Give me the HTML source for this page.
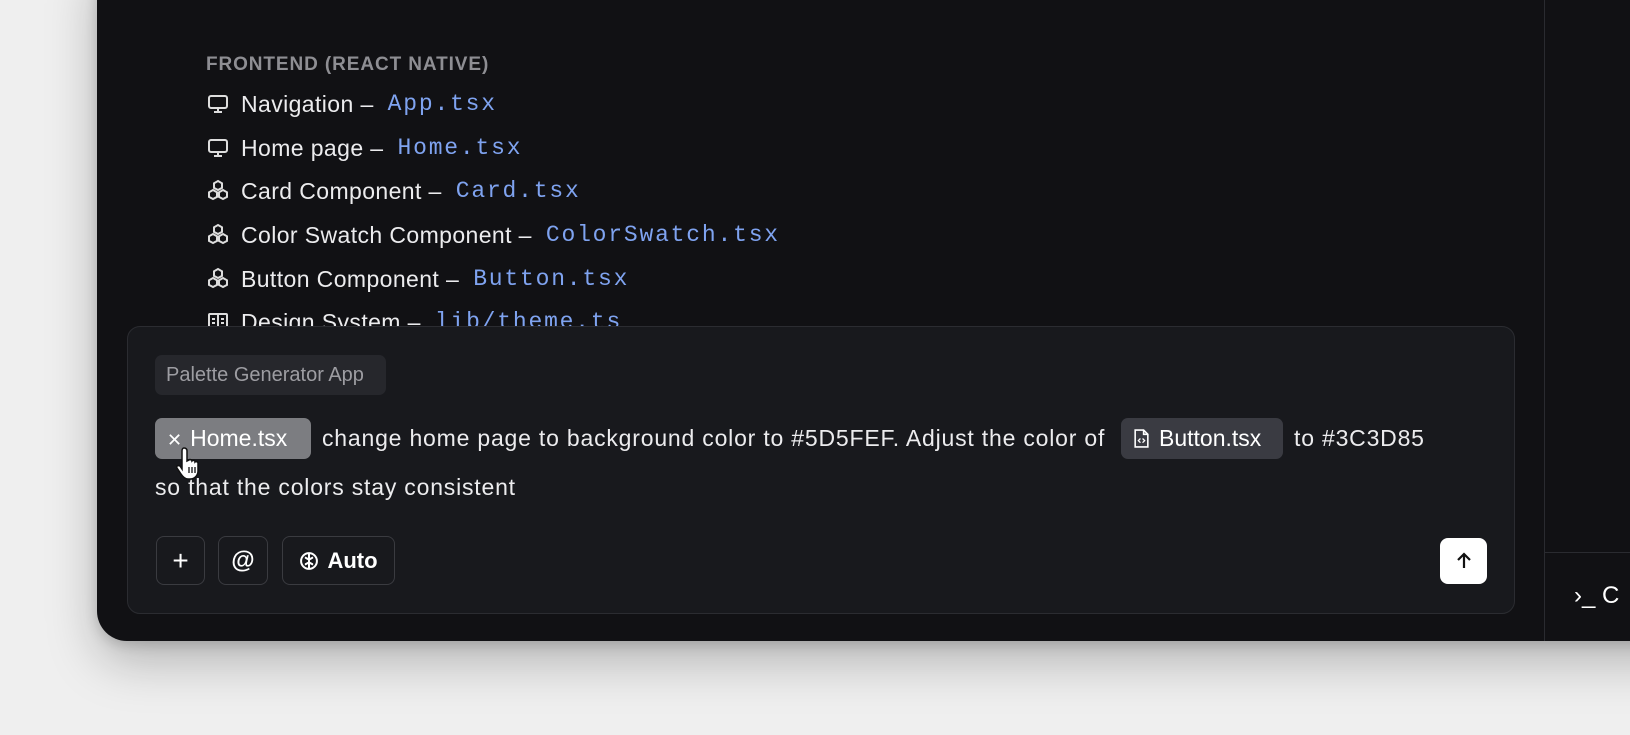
<!DOCTYPE html>
<html><head><meta charset="utf-8"><style>
*{margin:0;padding:0;box-sizing:border-box}
body{width:1630px;height:735px;background:#efefef;position:relative;overflow:hidden;font-family:"Liberation Sans",sans-serif}
.panel{position:absolute;left:97px;top:-40px;width:1600px;height:681px;background:#111114;border-radius:0 0 0 30px;box-shadow:0 20px 50px rgba(0,0,0,.25),0 4px 12px rgba(0,0,0,.15);overflow:hidden}
.a{position:absolute;white-space:nowrap}
.h{left:206px;top:54px;font-size:19px;font-weight:bold;color:#8e8e93;letter-spacing:0.9px}
.row{left:206px;font-size:23px;letter-spacing:0.4px;color:#ececee;height:30px;line-height:30px;display:flex;align-items:center}
.row svg{margin-right:11px;flex:none}
.m{font-family:"Liberation Mono",monospace;color:#7fa3f0;letter-spacing:1.8px;margin-left:14px}
.box{position:absolute;left:127px;top:326px;width:1388px;height:288px;background:#18191d;border:1px solid #2b2c31;border-radius:13px}
.chip{position:absolute;border-radius:7px}
.btn{position:absolute;border:1.5px solid #3a3b40;border-radius:8px;color:#fff;display:flex;align-items:center;justify-content:center}
.t{font-size:23px;letter-spacing:0.8px;color:#ececee}
</style></head><body>
<div class="panel"></div>
<div style="position:absolute;left:1544px;top:0;width:1px;height:641px;background:#2a2b30"></div>
<div style="position:absolute;left:1544px;top:552px;width:90px;height:1px;background:#2a2b30"></div>
<div class="a" style="left:1574px;top:582px;font-size:24px;color:#fff">›_ C</div>

<div class="a h">FRONTEND (REACT NATIVE)</div>
<div class="a row" style="top:89px"><svg width="24" height="24" viewBox="0 0 24 24" fill="none" stroke="#ddd" stroke-width="2"><rect x="3" y="4" width="18" height="12" rx="2"/><path d="M12 16v4M8 20h8"/></svg>Navigation –<span class="m">App.tsx</span></div>
<div class="a row" style="top:133px"><svg width="24" height="24" viewBox="0 0 24 24" fill="none" stroke="#ddd" stroke-width="2"><rect x="3" y="4" width="18" height="12" rx="2"/><path d="M12 16v4M8 20h8"/></svg>Home page –<span class="m">Home.tsx</span></div>
<div class="a row" style="top:176px"><svg width="24" height="24" viewBox="0 0 24 24" fill="none" stroke="#ddd" stroke-width="2"><path d="M12 2l4 2.3v4.6L12 11 8 8.9V4.3zM7 11l4 2.3v4.6L7 20 3 17.9v-4.6zM17 11l4 2.3v4.6L17 20l-4-2.1v-4.6z"/></svg>Card Component –<span class="m">Card.tsx</span></div>
<div class="a row" style="top:220px"><svg width="24" height="24" viewBox="0 0 24 24" fill="none" stroke="#ddd" stroke-width="2"><path d="M12 2l4 2.3v4.6L12 11 8 8.9V4.3zM7 11l4 2.3v4.6L7 20 3 17.9v-4.6zM17 11l4 2.3v4.6L17 20l-4-2.1v-4.6z"/></svg>Color Swatch Component –<span class="m">ColorSwatch.tsx</span></div>
<div class="a row" style="top:264px"><svg width="24" height="24" viewBox="0 0 24 24" fill="none" stroke="#ddd" stroke-width="2"><path d="M12 2l4 2.3v4.6L12 11 8 8.9V4.3zM7 11l4 2.3v4.6L7 20 3 17.9v-4.6zM17 11l4 2.3v4.6L17 20l-4-2.1v-4.6z"/></svg>Button Component –<span class="m">Button.tsx</span></div>
<div class="a row" style="top:307px"><svg width="24" height="24" viewBox="0 0 24 24" fill="none" stroke="#ddd" stroke-width="2"><rect x="3" y="4" width="18" height="16" rx="1"/><path d="M12 4v16M6 9h3M6 13h3M15 9h3M15 13h3"/></svg>Design System –<span class="m">lib/theme.ts</span></div>

<div class="box"></div>
<div class="chip a" style="left:155px;top:355px;width:231px;height:40px;background:#26272c;color:#9d9da2;font-size:20px;line-height:40px;padding-left:11px">Palette Generator App</div>
<div class="chip a" style="left:155px;top:418px;width:156px;height:41px;background:#7c7d81;color:#fff;font-size:23px;line-height:41px;padding-left:12px"><span style="font-size:18px;margin-right:8px">✕</span>Home.tsx</div>
<div class="a t" style="left:322px;top:425px">change home page to background color to #5D5FEF. Adjust the color of</div>
<div class="chip a" style="left:1121px;top:418px;width:162px;height:41px;background:#3a3b42;color:#fff;font-size:23px;line-height:41px;padding-left:12px;display:flex;align-items:center"><svg width="17" height="19" viewBox="0 0 16 18" fill="none" stroke="#fff" stroke-width="1.5" style="margin-right:9px"><path d="M2 1h8l4 4v12H2z M10 1v4h4"/><path d="M7 9l-2 2 2 2M9 9l2 2-2 2" stroke-width="1.2"/></svg>Button.tsx</div>
<div class="a t" style="left:1294px;top:425px">to #3C3D85</div>
<div class="a t" style="left:155px;top:474px">so that the colors stay consistent</div>
<svg class="a" style="left:176px;top:446px" width="30" height="34" viewBox="0 0 30 34"><path d="M8 2c2 0 3 1 3 3v10l2-1c1-1 3 0 3 1 1-1 3-1 3 1 1-1 3 0 3 1v8c0 4-3 8-8 8h-2c-3 0-5-2-7-5l-4-6c-1-2 1-3 3-2l2 3V5c0-2 1-3 2-3z" fill="#fff" stroke="#111" stroke-width="1.5"/><path d="M13 21v6M16 21v6M19 21v6" stroke="#111" stroke-width="1.3"/></svg>

<div class="btn" style="left:156px;top:536px;width:49px;height:49px;font-size:28px">+</div>
<div class="btn" style="left:218px;top:536px;width:50px;height:49px;font-size:24px;font-weight:bold">@</div>
<div class="btn" style="left:282px;top:536px;width:113px;height:49px;font-size:22px;font-weight:bold"><svg width="20" height="20" viewBox="0 0 24 24" fill="none" stroke="#fff" stroke-width="2.4" style="margin-right:8px"><circle cx="12" cy="12" r="9.5"/><path d="M12 3v18M7 8c2 0 3 2 5 2M17 8c-2 0-3 2-5 2M7 16c2 0 3-2 5-2M17 16c-2 0-3-2-5-2"/></svg>Auto</div>
<div class="a" style="left:1440px;top:538px;width:47px;height:46px;background:#fff;border-radius:8px;display:flex;align-items:center;justify-content:center"><svg width="20" height="20" viewBox="0 0 20 20" fill="none" stroke="#111" stroke-width="2.2"><path d="M10 17V3M4 9l6-6 6 6"/></svg></div>
</body></html>
